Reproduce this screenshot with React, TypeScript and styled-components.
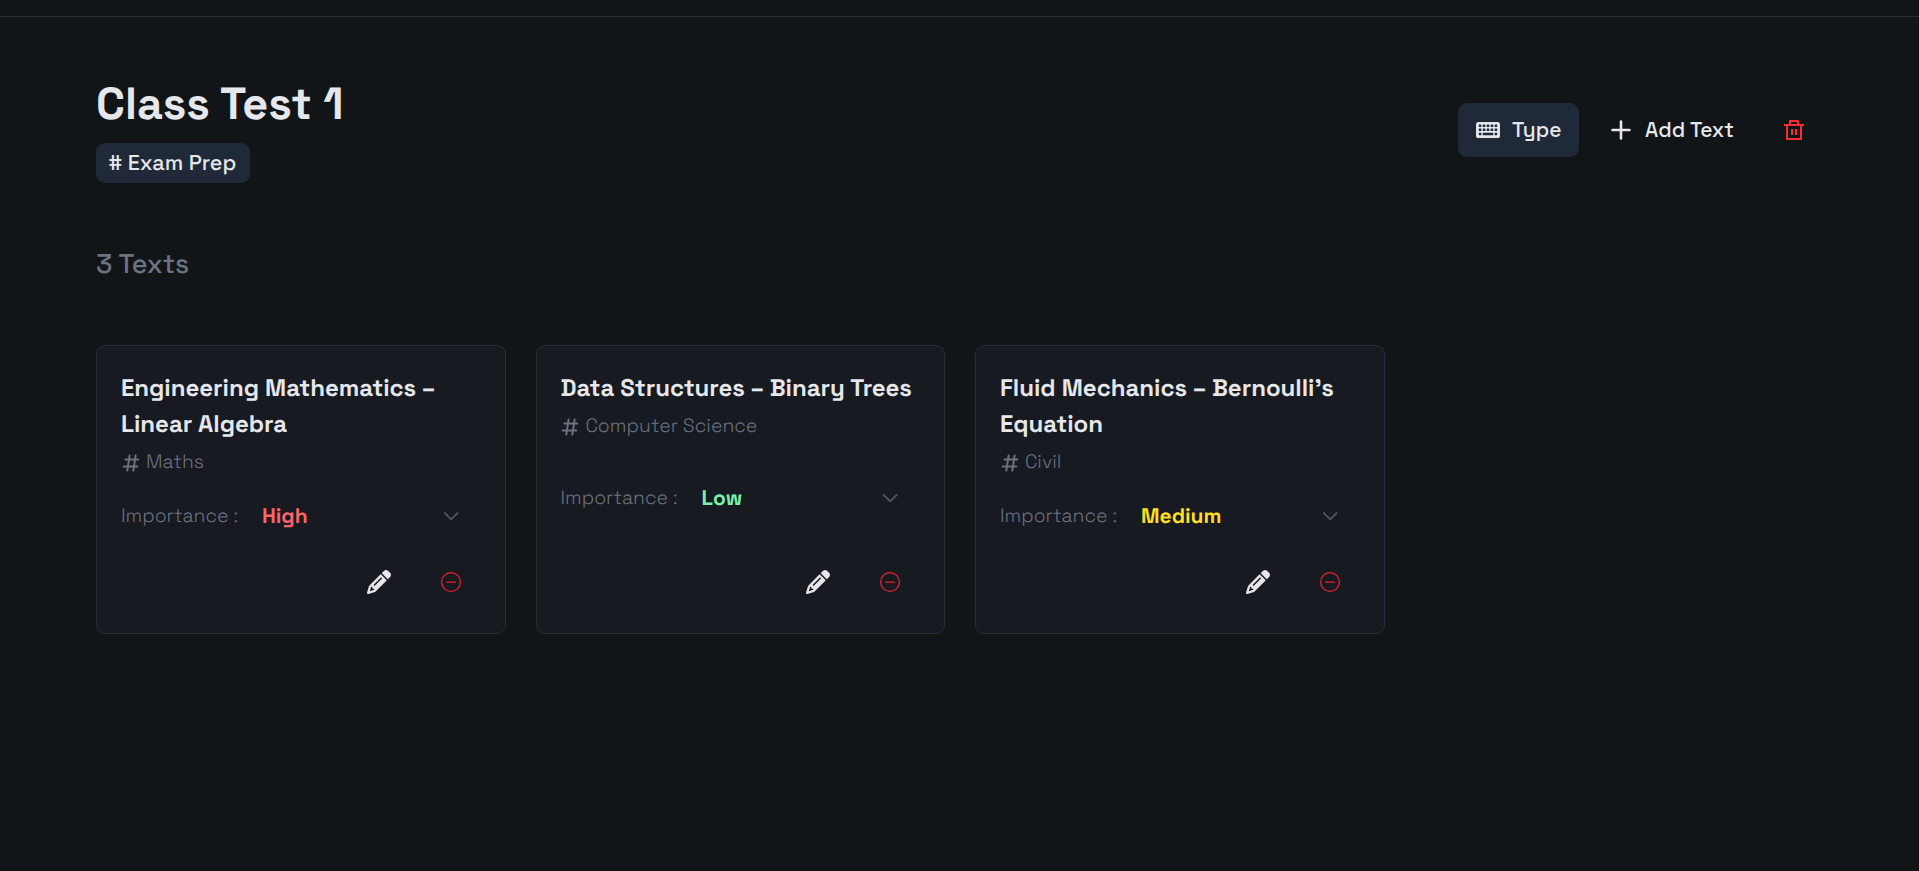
import React from "react";
import styled, { createGlobalStyle } from "styled-components";
import { FaPencil } from "react-icons/fa6";
import { RiDeleteBinLine } from "react-icons/ri";
import { BsDashCircle } from "react-icons/bs";

const GlobalStyle = createGlobalStyle`
  *, *::before, *::after { box-sizing: border-box; }
  html, body { margin: 0; background: #111518; }
  body {
    font-family: "Space Grotesk", Inter, "Liberation Sans", sans-serif;
    color: #e5e7eb;
    text-rendering: geometricPrecision;
  }
  svg { flex: none; display: block; }
`;

const Page = styled.div`
  min-height: 100vh;
  padding-top: 16px;
  background: #111518;
`;

const Content = styled.main`
  border-top: 1px solid #282e3b;
  padding: 60px 95px 0 96px;
`;

const Header = styled.header`
  display: flex;
  align-items: center;
  justify-content: space-between;
`;

const Heading = styled.div`
  display: flex;
  flex-direction: column;
  align-items: flex-start;
  gap: 10px;
`;

const Title = styled.h1`
  margin: 0;
  font-size: 45px;
  line-height: 56px;
  font-weight: 700;
`;

const Badge = styled.span`
  display: flex;
  width: 154px;
  height: 40px;
  padding-left: 12.5px;
  border-radius: 9px;
  background: #202938;
  font-size: 21.6px;
  line-height: 41px;
  font-weight: 500;
  white-space: nowrap;
`;

const Toolbar = styled.div`
  display: flex;
  gap: 12px;
`;

const Button = styled.button<{ $filled?: boolean; $danger?: boolean }>`
  display: flex;
  align-items: center;
  gap: 12px;
  height: 54px;
  padding: 0 18px;
  border: 0;
  border-radius: 9px;
  background: ${(p) => (p.$filled ? "#202938" : "transparent")};
  color: ${(p) => (p.$danger ? "#fb2c36" : "#e5e7eb")};
  font: inherit;
  cursor: pointer;
`;

const ButtonLabel = styled.span<{ $width: number }>`
  width: ${(p) => p.$width}px;
  font-size: 21px;
  line-height: 30px;
  font-weight: 500;
  text-align: left;
  white-space: nowrap;
`;

const Count = styled.h2`
  margin: 63px 0;
  font-size: 27px;
  line-height: 36px;
  font-weight: 500;
  color: #6b7280;
`;

const Grid = styled.section`
  display: grid;
  grid-template-columns: repeat(4, 409.5px);
  gap: 30px;
`;

const Card = styled.article`
  display: flex;
  flex-direction: column;
  justify-content: space-between;
  height: 289px;
  padding: 24px;
  border: 1px solid #262d36;
  border-radius: 9px;
  background: #171a21;
`;

const CardTitle = styled.h3`
  margin: 0 -10px -1px 0;
  padding-top: 1px;
  font-size: 24px;
  line-height: 36px;
  font-weight: 700;
  letter-spacing: -0.02px;
`;

const TitleLine = styled.span`
  display: block;
  white-space: nowrap;
`;

const Tag = styled.div`
  display: flex;
  align-items: center;
  gap: 4.5px;
  height: 30px;
  margin: 4px 0 0 -1.5px;
  color: #6b7280;
  font-size: 19.3px;
  font-weight: 300;

  svg { margin-top: 3px; }
`;

const Importance = styled.div`
  display: flex;
  align-items: center;
  height: 36px;
`;

const ImportanceLabel = styled.span`
  width: 123px;
  color: #6b7280;
  font-size: 19.3px;
  font-weight: 300;
  white-space: nowrap;
`;

const Select = styled.div<{ $color: string }>`
  display: flex;
  flex: 1;
  align-items: center;
  justify-content: space-between;
  padding: 0 18px;
  color: ${(p) => p.$color};
  font-size: 21px;
  font-weight: 700;
`;

const SelectValue = styled.span`
  padding-top: 2px;
`;

const Actions = styled.div`
  display: flex;
  justify-content: flex-end;
  gap: 12px;
`;

const IconButton = styled.button<{ $danger?: boolean }>`
  display: flex;
  align-items: center;
  justify-content: center;
  width: 60px;
  height: 54px;
  padding: 0;
  border: 0;
  background: transparent;
  color: ${(p) => (p.$danger ? "#e5252d" : "#e5e7eb")};
  cursor: pointer;
`;

const KeyboardIcon = () => (
  <svg width="24" height="16" viewBox="0 0 24 16">
    <rect width="24" height="16" rx="2.6" fill="currentColor" />
    <g fill="#202938">
      {[2.6, 6.6].map((y) =>
        [2.8, 6.75, 10.7, 14.65, 18.6].map((x) => (
          <rect key={`${x}-${y}`} x={x} y={y} width="2.6" height="2.5" rx="0.4" />
        ))
      )}
      <rect x="2.8" y="10.7" width="2.6" height="2.5" rx="0.4" />
      <rect x="6.75" y="10.7" width="10.5" height="2.5" rx="0.4" />
      <rect x="18.6" y="10.7" width="2.6" height="2.5" rx="0.4" />
    </g>
  </svg>
);

const PlusIcon = () => (
  <svg width="24" height="24" viewBox="0 0 24 24" fill="none" stroke="currentColor" strokeWidth="2.6" strokeLinecap="round">
    <path d="M12 3.5v17M3.5 12h17" />
  </svg>
);

const HashIcon = () => (
  <svg width="22" height="22" viewBox="-2.6 -2.6 22 22" fill="none" stroke="currentColor" strokeWidth="2" strokeLinecap="round">
    <path d="M7 1L4.7 16M13 1L10.7 16M2.8 4.8H15.7M1 12H14.7" />
  </svg>
);

const ChevronIcon = () => (
  <svg width="24" height="24" viewBox="0 0 24 24" fill="none" stroke="#4b5563" strokeWidth="1.8" strokeLinecap="round" strokeLinejoin="round">
    <path d="M5.8 9l6.4 6.4L18.6 9" />
  </svg>
);

const levels = { High: "#ff6467", Low: "#7bf1a8", Medium: "#ffdf20" };

type Text = {
  lines: string[];
  tag: string;
  level: keyof typeof levels;
};

const texts: Text[] = [
  { lines: ["Engineering Mathematics –", "Linear Algebra"], tag: "Maths", level: "High" },
  { lines: ["Data Structures – Binary Trees"], tag: "Computer Science", level: "Low" },
  { lines: ["Fluid Mechanics – Bernoulli’s", "Equation"], tag: "Civil", level: "Medium" },
];

export default function App() {
  return (
    <Page>
      <GlobalStyle />
      <Content>
        <Header>
          <Heading>
            <Title>Class Test 1</Title>
            <Badge># Exam Prep</Badge>
          </Heading>
          <Toolbar>
            <Button $filled>
              <KeyboardIcon />
              <ButtonLabel $width={49}>Type</ButtonLabel>
            </Button>
            <Button>
              <PlusIcon />
              <ButtonLabel $width={89}>Add Text</ButtonLabel>
            </Button>
            <Button $danger aria-label="Delete">
              <RiDeleteBinLine size={24} />
            </Button>
          </Toolbar>
        </Header>
        <Count>3 Texts</Count>
        <Grid>
          {texts.map((t) => (
            <Card key={t.tag}>
              <div>
                <CardTitle>
                  {t.lines.map((line) => (
                    <TitleLine key={line}>{line}</TitleLine>
                  ))}
                </CardTitle>
                <Tag>
                  <HashIcon />
                  {t.tag}
                </Tag>
              </div>
              <Importance>
                <ImportanceLabel>Importance :</ImportanceLabel>
                <Select $color={levels[t.level]}>
                  <SelectValue>{t.level}</SelectValue>
                  <ChevronIcon />
                </Select>
              </Importance>
              <Actions>
                <IconButton aria-label="Edit">
                  <FaPencil size={24} />
                </IconButton>
                <IconButton $danger aria-label="Remove">
                  <BsDashCircle size={20} />
                </IconButton>
              </Actions>
            </Card>
          ))}
        </Grid>
      </Content>
    </Page>
  );
}
